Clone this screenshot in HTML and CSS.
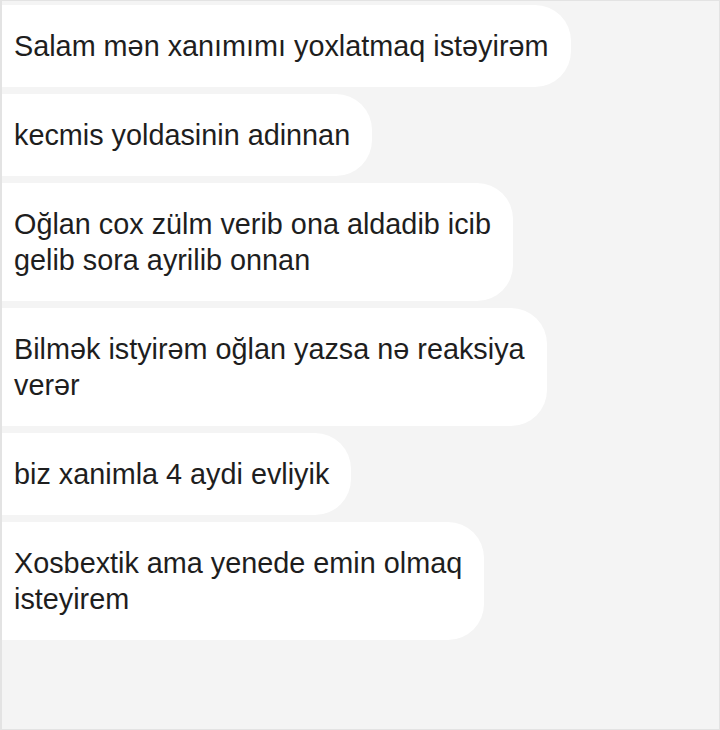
FILE: index.html
```html
<!DOCTYPE html>
<html>
<head>
    <title>Chat</title>
    <link rel="stylesheet" href="styles.css">
</head>
<body>
    <div class="chat">
        <div class="bubble">Salam mən xanımımı yoxlatmaq istəyirəm</div>
        <div class="bubble">kecmis yoldasinin adinnan</div>
        <div class="bubble">Oğlan cox zülm verib ona aldadib icib<br>gelib sora ayrilib onnan</div>
        <div class="bubble">Bilmək istyirəm oğlan yazsa nə reaksiya<br>verər</div>
        <div class="bubble">biz xanimla 4 aydi evliyik</div>
        <div class="bubble">Xosbextik ama yenede emin olmaq<br>isteyirem</div>
    </div>
</body>
</html>
```

FILE: styles.css
```css
html, body {
    margin: 0;
    height: 100%;
}
body {
    font-family: "Liberation Sans", Arial, sans-serif;
    background: #f4f4f4;
    border: 1px solid #e3e3e3;
    border-left-width: 2px;
    box-sizing: border-box;
}
.chat {
    display: flex;
    flex-direction: column;
    align-items: flex-start;
    gap: 7px;
    padding-top: 4px;
}
.bubble {
    background: #fff;
    color: #1e1e1e;
    font-size: 28.8px;
    line-height: 36px;
    padding: 23px 22px 23px 12px;
    border-radius: 0 36px 36px 0;
    white-space: nowrap;
}
```
